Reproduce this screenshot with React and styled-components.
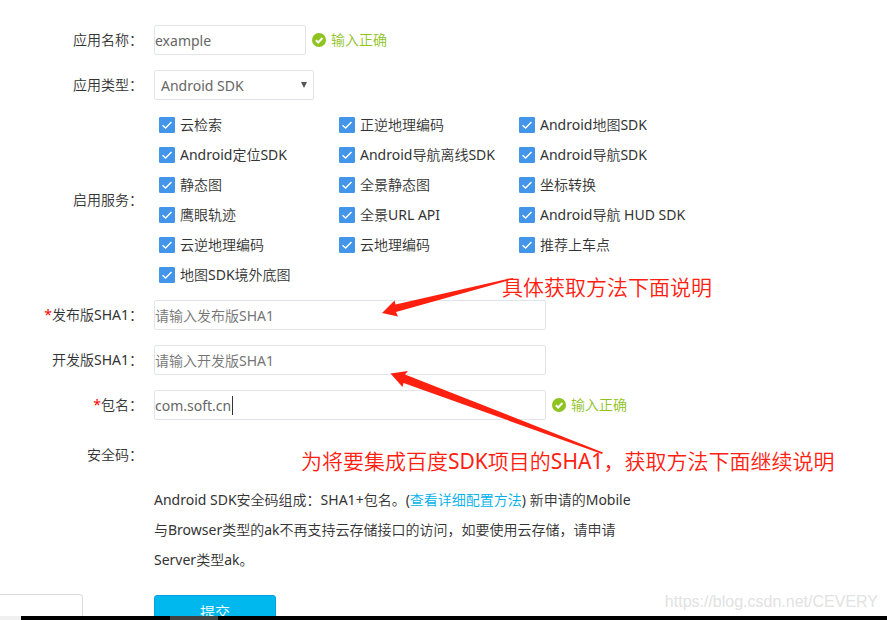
import React, { useState } from "react";
import styled, { createGlobalStyle } from "styled-components";

const services = [
  "云检索",
  "正逆地理编码",
  "Android地图SDK",
  "Android定位SDK",
  "Android导航离线SDK",
  "Android导航SDK",
  "静态图",
  "全景静态图",
  "坐标转换",
  "鹰眼轨迹",
  "全景URL API",
  "Android导航 HUD SDK",
  "云逆地理编码",
  "云地理编码",
  "推荐上车点",
  "地图SDK境外底图",
];

function Valid() {
  return (
    <StValid>
      <svg width="14" height="14" viewBox="0 0 14 14" aria-hidden="true">
        <circle cx="7" cy="7" r="7" fill="#8fc31f" />
        <path d="M3.8 7.2 L6.2 9.5 L10.4 5" fill="none" stroke="#fff" strokeWidth="2" />
      </svg>
      <span>输入正确</span>
    </StValid>
  );
}

function App() {
  const [form, setForm] = useState({
    name: "example",
    type: "Android SDK",
    release: "",
    develop: "",
    pkg: "com.soft.cn",
  });
  const [checked, setChecked] = useState(services);

  const onChangeHandler = (e) => {
    const { name, value } = e.target;
    setForm({ ...form, [name]: value });
  };

  const onCheckHandler = (service) => {
    setChecked(
      checked.includes(service)
        ? checked.filter((item) => item !== service)
        : [...checked, service]
    );
  };

  return (
    <StScreen>
      <GlobalStyle />
      <StForm onSubmit={(e) => e.preventDefault()}>
        <StRow>
          <StLabel htmlFor="name">应用名称：</StLabel>
          <StInput id="name" name="name" $width={152} value={form.name} onChange={onChangeHandler} />
          <Valid />
        </StRow>
        <StRow>
          <StLabel htmlFor="type">应用类型：</StLabel>
          <StSelectBox>
            <StSelect id="type" name="type" value={form.type} onChange={onChangeHandler}>
              <option>Android SDK</option>
            </StSelect>
            <StArrow width="6" height="6" viewBox="0 0 6 6" aria-hidden="true">
              <path d="M0 0 H6 L3 6 Z" fill="#555" />
            </StArrow>
          </StSelectBox>
        </StRow>
        <StServiceRow>
          <StLabel as="span">启用服务：</StLabel>
          <StServices>
            {services.map((service) => (
              <StService key={service}>
                <StCheck
                  type="checkbox"
                  checked={checked.includes(service)}
                  onChange={() => onCheckHandler(service)}
                />
                {service}
              </StService>
            ))}
          </StServices>
        </StServiceRow>
        <StRow>
          <StLabel htmlFor="release"><StMust>*</StMust>发布版SHA1：</StLabel>
          <StInput id="release" name="release" $width={392} placeholder="请输入发布版SHA1" value={form.release} onChange={onChangeHandler} />
        </StRow>
        <StRow>
          <StLabel htmlFor="develop">开发版SHA1：</StLabel>
          <StInput id="develop" name="develop" $width={392} placeholder="请输入开发版SHA1" value={form.develop} onChange={onChangeHandler} />
        </StRow>
        <StRow>
          <StLabel htmlFor="pkg"><StMust>*</StMust>包名：</StLabel>
          <StCaretBox>
            <StInput id="pkg" name="pkg" $width={392} value={form.pkg} onChange={onChangeHandler} />
            <StCaret />
          </StCaretBox>
          <Valid />
        </StRow>
        <StCodeRow>
          <StLabel as="span">安全码：</StLabel>
        </StCodeRow>
        <StIndent>
          <StHelp>
            Android SDK安全码组成：SHA1+包名。(<a href="#help">查看详细配置方法</a>) 新申请的Mobile与Browser类型的ak不再支持云存储接口的访问，如要使用云存储，请申请Server类型ak。
          </StHelp>
        </StIndent>
        <StIndent>
          <StSubmit>提交</StSubmit>
        </StIndent>
      </StForm>

      {/* 빨간 화살표와 설명 */}
      <StArrows width="620" height="470" viewBox="0 0 620 470" aria-hidden="true">
        <path d="M382 313 L394.5 300.5 L395.5 304.5 L503 280 L513 278 L513 279 L503 282 L396 312 L398 316.5 Z" />
        <path d="M390.5 373.5 L408 371 L405 374.5 L603 452.5 L602 454 L403.5 383 L402.5 387 Z" />
      </StArrows>
      <StNote $left={502} $top={272}>具体获取方法下面说明</StNote>
      <StNote $left={301} $top={446}>为将要集成百度SDK项目的SHA1，获取方法下面继续说明</StNote>
      <StWatermark>https://blog.csdn.net/CEVERY</StWatermark>

      <StStatus />
      <StTaskbar>
        <StTask $width={21} $color="#f0f0f0" />
        <StTask $width={149} $color="#000" />
        <StTask $width={48} $color="#414141" />
      </StTaskbar>
    </StScreen>
  );
}

export default App;

const GlobalStyle = createGlobalStyle`
  * {
    box-sizing: border-box;
  }
  body {
    margin: 0;
    background-color: #fff;
    color: #333;
    font-family: "Noto Sans", "Noto Sans CJK SC DemiLight", "Noto Sans CJK SC Light", "Noto Sans CJK SC", sans-serif;
    font-size: 14px;
    line-height: 30px;
    font-feature-settings: "chws" 0;
  }
  input, select, button {
    font: inherit;
  }
`;

const StScreen = styled.div`
  position: relative;
  height: 100vh;
  overflow: hidden;
`;

const StForm = styled.form`
  display: flex;
  flex-direction: column;
  gap: 15px;
  padding-top: 25px;
`;

const StRow = styled.div`
  display: flex;
  align-items: center;
  height: 30px;
`;

const StServiceRow = styled.div`
  display: flex;
  align-items: center;
  margin: -5px 0;
`;

const StCodeRow = styled(StRow)`
  margin-top: 5px;
`;

const StLabel = styled.label`
  flex-shrink: 0;
  width: 143px;
  margin-right: 11px;
  text-align: right;
`;

const StMust = styled.span`
  color: #f00;
`;

const StInput = styled.input`
  display: block;
  width: ${(props) => props.$width}px;
  height: 30px;
  padding: 0;
  border: 1px solid #e1e4eb;
  border-radius: 2px;
  background-color: #fff;
  color: #666;
  line-height: 20px;
  outline: none;

  &::placeholder {
    color: #757575;
    opacity: 1;
  }
`;

const StSelectBox = styled.div`
  position: relative;
`;

const StSelect = styled.select`
  appearance: none;
  display: block;
  width: 160px;
  height: 30px;
  padding: 0 6px;
  border: 1px solid #e1e4eb;
  border-radius: 2px;
  background-color: #fff;
  color: #666;
`;

const StArrow = styled.svg`
  position: absolute;
  top: 12px;
  right: 7px;
  pointer-events: none;
`;

const StValid = styled.span`
  display: flex;
  align-items: center;
  gap: 5px;
  margin-left: 6px;
  color: #8fc31f;
`;

const StServices = styled.div`
  display: grid;
  grid-template-columns: 180px 180px 200px;
  padding-left: 5px;
`;

const StService = styled.label`
  display: flex;
  align-items: center;
  gap: 5px;
  height: 30px;
  white-space: nowrap;
`;

const StCheck = styled.input`
  appearance: none;
  width: 16px;
  height: 16px;
  margin: 0;
  border: 1px solid #4395ea;
  border-radius: 1px;

  &:checked {
    background: #4395ea url("data:image/svg+xml,%3Csvg xmlns='http://www.w3.org/2000/svg' viewBox='0 0 14 14'%3E%3Cpath d='M2.5 7.2 L5.6 10 L11.5 4' fill='none' stroke='white' stroke-width='1.4'/%3E%3C/svg%3E") center / 14px 14px no-repeat;
  }
`;

const StCaretBox = styled.div`
  position: relative;
`;

const StCaret = styled.span`
  position: absolute;
  top: 6px;
  left: 78px;
  width: 1px;
  height: 19px;
  background-color: #333;
`;

const StIndent = styled.div`
  padding-left: 154px;
`;

const StHelp = styled.p`
  max-width: 490px;
  margin: 0 0 5px;

  a {
    color: #00b0eb;
    text-decoration: none;
  }
`;

const StSubmit = styled.button`
  width: 122px;
  height: 34px;
  padding: 0;
  border: 1px solid #00a2e0;
  border-radius: 3px;
  background-color: #00b7ee;
  color: #fff;
  font-size: 15px;
`;

const StArrows = styled.svg`
  position: absolute;
  top: 0;
  left: 0;
  fill: #ff2010;
  pointer-events: none;
`;

const StNote = styled.div`
  position: absolute;
  top: ${(props) => props.$top}px;
  left: ${(props) => props.$left}px;
  color: #ff2010;
  font-size: 21px;
  white-space: nowrap;
`;

const StWatermark = styled.div`
  position: absolute;
  right: 9px;
  bottom: 8px;
  color: #e2e2e2;
  font-family: "Liberation Sans", sans-serif;
  font-size: 16px;
  line-height: 20px;
`;

const StStatus = styled.div`
  position: absolute;
  bottom: 4px;
  left: 0;
  width: 83px;
  height: 22px;
  border: 1px solid #ddd;
  border-width: 1px 1px 0 0;
  border-top-right-radius: 4px;
  background-color: #fff;
`;

const StTaskbar = styled.div`
  position: absolute;
  right: 0;
  bottom: 0;
  left: 0;
  display: flex;
  height: 4px;
  background-color: #000;
`;

const StTask = styled.div`
  width: ${(props) => props.$width}px;
  background-color: ${(props) => props.$color};
`;
